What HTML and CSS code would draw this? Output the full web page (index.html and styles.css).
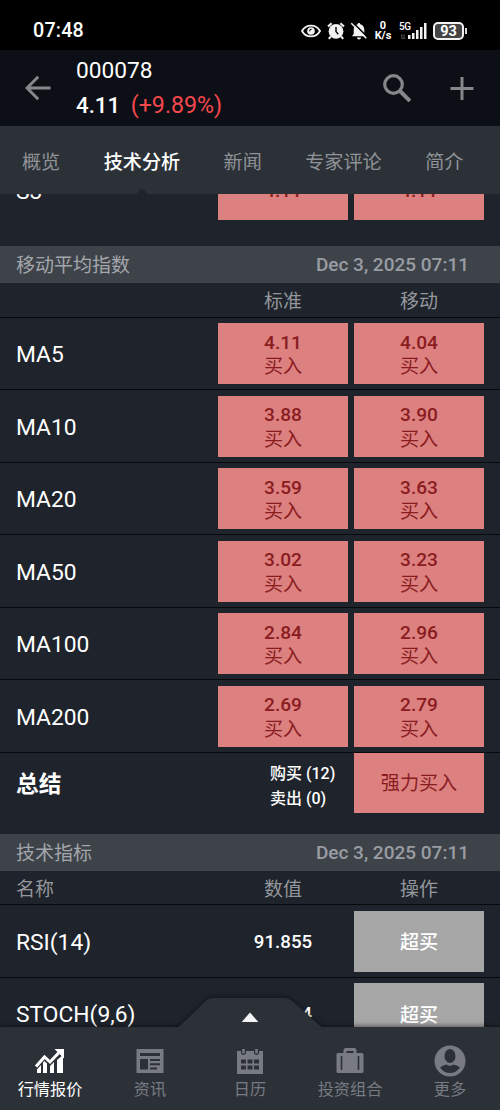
FILE: index.html
```html
<!DOCTYPE html>
<html lang="zh-CN">
<head>
  <meta charset="UTF-8">
  <meta name="viewport" content="width=device-width, initial-scale=1.0">
  <title>000078 技术分析</title>
  <link rel="stylesheet" href="styles.css">
</head>
<body>
  <div class="app">
    <div class="status-bar">
      <span class="time">07:48</span>
      <div class="status-icons">
        <svg class="eye" width="20" height="14" viewBox="0 0 20 14"><path d="M1 7C5-.2 15-.2 19 7 15 14.2 5 14.2 1 7z" fill="none" stroke="#f2f2f2" stroke-width="1.8"/><circle cx="10" cy="7" r="3.8" fill="#f2f2f2"/><path d="M8.7 7.2a1.8 1.8 0 0 1 2-2" fill="none" stroke="#000" stroke-width="1.1"/></svg>
        <svg class="alarm" width="18" height="18" viewBox="0 0 18 18"><circle cx="9" cy="9.3" r="7.4" fill="#f2f2f2"/><path d="M1 4.6L4.6 1.2M17 4.6l-3.6-3.4M3.8 14.5l-2 2.4M14.2 14.5l2 2.4" stroke="#f2f2f2" stroke-width="2"/><path d="M9 5v4.6l2.3 2.6" fill="none" stroke="#000" stroke-width="1.4"/></svg>
        <svg class="bell" width="18" height="18" viewBox="0 0 18 18"><path d="M9 1c.9 0 1.3.6 1.3 1.3C13 3 14.3 5 14.3 8v4l1.7 2.3H2L3.7 12V8C3.7 5 5 3 7.7 2.3 7.7 1.6 8.1 1 9 1zM7 15.4h4a2 2 0 0 1-4 0z" fill="#f2f2f2"/><path d="M2.6.2L17.6 15.2" stroke="#000" stroke-width="1.5"/><path d="M1.3 1.2L16.3 16.2" stroke="#f2f2f2" stroke-width="1.5"/></svg>
        <div class="speed"><span>0</span><span>K/s</span></div>
        <div class="signal">
          <span class="net">5G</span>
          <svg width="28" height="18" viewBox="0 0 28 18"><path d="M9 13h2.5v4H9zM13 11h2.5v6H13zM17 8h2.5v9H17zM21 5h2.5v12H21zM25 1h2.5v16H25z" fill="#f2f2f2"/><path d="M2 12.5h4v1H3v1h3V17H2v-1h3v-.5H2z" fill="#444"/></svg>
        </div>
        <div class="battery"><span class="level">93</span><span class="cap"></span></div>
      </div>
    </div>

    <header class="header">
      <svg class="back" width="26" height="26" viewBox="0 0 26 26"><path d="M25.5 13H2.5M13.2 1.8L2 13l11.2 11.2" fill="none" stroke="#85878b" stroke-width="3"/></svg>
      <div class="quote">
        <div class="symbol">000078</div>
        <div class="price">4.11 <span class="change">(+9.89%)</span></div>
      </div>
      <svg class="search" width="28" height="28" viewBox="0 0 28 28"><circle cx="10.5" cy="10.5" r="8.8" fill="none" stroke="#85878b" stroke-width="3.2"/><path d="M17 17l10 10" stroke="#85878b" stroke-width="4"/></svg>
      <svg class="add" width="24" height="24" viewBox="0 0 24 24"><path d="M.5 12.5h23M12 1v23" stroke="#85878b" stroke-width="3"/></svg>
    </header>

    <nav class="tabs">
      <a class="tab">概览</a>
      <a class="tab active">技术分析</a>
      <a class="tab">新闻</a>
      <a class="tab">专家评论</a>
      <a class="tab">简介</a>
    </nav>

    <main class="content">
      <div class="row row-cut">
        <span class="name">S3</span>
        <div class="cell buy">4.11</div>
        <div class="cell buy">4.11</div>
      </div>

      <section class="averages">
        <div class="section-title"><span>移动平均指数</span><span class="date">Dec 3, 2025 07:11</span></div>
        <div class="columns"><span></span><span>标准</span><span>移动</span></div>
        <div class="row">
          <span class="name">MA5</span>
          <div class="cell buy">4.11<br>买入</div>
          <div class="cell buy">4.04<br>买入</div>
        </div>
        <div class="row">
          <span class="name">MA10</span>
          <div class="cell buy">3.88<br>买入</div>
          <div class="cell buy">3.90<br>买入</div>
        </div>
        <div class="row">
          <span class="name">MA20</span>
          <div class="cell buy">3.59<br>买入</div>
          <div class="cell buy">3.63<br>买入</div>
        </div>
        <div class="row">
          <span class="name">MA50</span>
          <div class="cell buy">3.02<br>买入</div>
          <div class="cell buy">3.23<br>买入</div>
        </div>
        <div class="row">
          <span class="name">MA100</span>
          <div class="cell buy">2.84<br>买入</div>
          <div class="cell buy">2.96<br>买入</div>
        </div>
        <div class="row">
          <span class="name">MA200</span>
          <div class="cell buy">2.69<br>买入</div>
          <div class="cell buy">2.79<br>买入</div>
        </div>
        <div class="summary">
          <span class="summary-name">总结</span>
          <div class="counts">购买 (12)<br>卖出 (0)</div>
          <div class="cell buy">强力买入</div>
        </div>
      </section>

      <section class="indicators">
        <div class="section-title"><span>技术指标</span><span class="date">Dec 3, 2025 07:11</span></div>
        <div class="columns"><span class="left">名称</span><span>数值</span><span>操作</span></div>
        <div class="row">
          <span class="name">RSI(14)</span>
          <div class="value">91.855</div>
          <div class="cell over">超买</div>
        </div>
        <div class="row">
          <span class="name">STOCH(9,6)</span>
          <div class="value">98.334</div>
          <div class="cell over">超买</div>
        </div>
      </section>
    </main>

    <footer class="bottom-nav">
      <svg class="drawer" width="150" height="34" viewBox="0 0 150 34"><path d="M2 34L7 30 30 7.5Q34 4 39 4H109Q114 4 118 7.5L143 30 148 34z" fill="#2c3138"/><path d="M75 18.5l8.3 9.5H66.7z" fill="#f4f4f6"/></svg>
      <a class="nav-item active">
        <svg width="32" height="32" viewBox="0 0 32 32"><path d="M2 21.5L10.5 12l5.5 5L26 6.5" fill="none" stroke="#fff" stroke-width="3"/><path d="M20.5 4H30v9.5z" fill="#fff"/><path d="M3 28v-3.5L7 20v8zM9 28V17.5l1.5-1.5L13 18.5V28zM16 28v-7l4-4v11zM23 28V15l6-5v18z" fill="#fff"/></svg>
        <span>行情报价</span>
      </a>
      <a class="nav-item">
        <svg width="32" height="32" viewBox="0 0 32 32"><path fill-rule="evenodd" d="M3 4h26q.5 0 .5.5v23q0 .5-.5.5H3q-.5 0-.5-.5v-23Q2.5 4 3 4zM6 8v3h20V8zM6 14v10.5h8V14zM16 14v2h10v-2zM16 18.3v2h10v-2zM16 22.5v2h7v-2z" fill="#787b83"/></svg>
        <span>资讯</span>
      </a>
      <a class="nav-item">
        <svg width="32" height="32" viewBox="0 0 32 32"><path fill-rule="evenodd" d="M3 6h4v2.5q2.5 3 5 0V6h8v2.5q2.5 3 5 0V6h4v23H3zM7 14.5v4h5v-4zM13.5 14.5v4h5v-4zM20 14.5v4h5v-4zM7 20.5v4h5v-4zM13.5 20.5v4h5v-4zM20 20.5v4h5v-4z" fill="#787b83"/><path d="M9.5 4v4.5M22.5 4v4.5" stroke="#787b83" stroke-width="2.5"/></svg>
        <span>日历</span>
      </a>
      <a class="nav-item">
        <svg width="32" height="32" viewBox="0 0 32 32"><path d="M11 8.5V5.500q0-1 1-1h8q1 0 1 1v3" fill="none" stroke="#787b83" stroke-width="3"/><rect x="2.5" y="8" width="27" height="20" rx="1.5" fill="#787b83"/><path d="M7.5 11v14M24.5 11v14" stroke="#2c3138" stroke-width="1.6"/></svg>
        <span>投资组合</span>
      </a>
      <a class="nav-item">
        <svg width="34" height="34" viewBox="0 0 32 32"><circle cx="16" cy="16" r="15.5" fill="#787b83"/><ellipse cx="16" cy="11" rx="5.5" ry="7" fill="#2c3138"/><path d="M6 22.5q3-2.5 6.5-3 3.5 2.5 7 0 3.500.5 6.500 3Q22 28 16 28T6 22.5z" fill="#2c3138"/></svg>
        <span>更多</span>
      </a>
    </footer>
  </div>
</body>
</html>
```
FILE: styles.css
```css
body {
  font-family: Roboto, "Noto Sans CJK SC", sans-serif;
  margin: 0;
  background-color: #1f242c;
  color: #fff;
}

svg {
  display: block;
  flex-shrink: 0;
}

.app {
  display: flex;
  flex-direction: column;
  height: 1110px;
  overflow: hidden;
}

/* Status bar */
.status-bar {
  display: flex;
  align-items: center;
  justify-content: space-between;
  box-sizing: border-box;
  height: 50px;
  padding: 11px 33px 0 33px;
  background: #000;
  flex-shrink: 0;
}

.time {
  font-size: 19.7px;
  font-weight: 500;
  letter-spacing: 0.2px;
}

.status-icons {
  display: flex;
  align-items: center;
}

.eye {
  margin-right: 6px;
}

.alarm {
  margin-right: 5px;
}

.bell {
  margin-right: 6px;
}

.speed {
  display: flex;
  flex-direction: column;
  align-items: center;
  width: 18px;
  margin-right: 7px;
  font-size: 11px;
  font-weight: 700;
  line-height: 10px;
}

.signal {
  position: relative;
  margin-right: 6px;
}

.net {
  position: absolute;
  left: 0;
  top: 0;
  font-size: 10px;
  font-weight: 500;
  line-height: 10px;
  letter-spacing: -0.5px;
}

.battery {
  display: flex;
  align-items: center;
  gap: 1px;
}

.level {
  box-sizing: border-box;
  width: 31px;
  height: 18px;
  border: 2px solid #f2f2f2;
  border-radius: 5px;
  background: #444;
  font-size: 14.5px;
  font-weight: 700;
  line-height: 15px;
  text-align: center;
}

.cap {
  width: 2px;
  height: 6px;
  background: #d8d8d8;
}

/* Header */
.header {
  display: flex;
  align-items: center;
  box-sizing: border-box;
  height: 76px;
  padding: 0 26px 0 25px;
  background: #0c0f15;
  flex-shrink: 0;
}

.quote {
  flex: 1;
  margin-left: 25px;
}

.symbol {
  font-size: 22.7px;
  line-height: 34px;
}

.price {
  font-size: 22.3px;
  font-weight: 500;
  line-height: 34px;
  white-space: pre;
}

.change {
  margin-left: 5px;
  font-size: 23.2px;
  font-weight: 400;
  color: #f5484d;
}

.search {
  margin-right: 39px;
}

/* Tabs */
.tabs {
  display: flex;
  gap: 43.5px;
  box-sizing: border-box;
  height: 68px;
  padding-left: 22px;
  background: #2c3138;
  font-size: 19.1px;
  line-height: 73px;
  color: #8f9296;
  white-space: nowrap;
  flex-shrink: 0;
}

.tab {
  position: relative;
}

.tab.active {
  color: #fff;
  font-weight: 500;
}

.tab.active::after {
  content: "";
  position: absolute;
  left: 50%;
  bottom: 0;
  margin-left: -6px;
  border: 6px solid transparent;
  border-top: 0;
  border-bottom-color: #1f242c;
}

/* Tables */
.content {
  flex: 1;
  min-height: 0;
  overflow: hidden;
}

.row,
.summary {
  display: grid;
  grid-template-columns: 196px 130px 130px;
  column-gap: 6px;
  align-items: center;
  box-sizing: border-box;
  padding-left: 16px;
}

.row {
  height: 72.5px;
  border-top: 1px solid #07090c;
}

.row-cut {
  height: 61px;
  margin: -35px 0 26px;
  border-top: 0;
}

.name {
  padding-top: 2px;
  font-size: 22.8px;
}

.row-cut .name {
  padding-top: 3px;
}

.cell {
  display: flex;
  flex-direction: column;
  justify-content: center;
  height: 61px;
  font-size: 19.1px;
  line-height: 24.5px;
  text-align: center;
}

.row .cell {
  display: block;
  box-sizing: border-box;
  padding-top: 7.5px;
}

.row .buy::first-line {
  font-weight: 500;
}

.row-cut .cell {
  padding-top: 19.5px;
}

.row .over {
  padding-top: 20.5px;
  font-weight: 500;
}

.buy {
  background: #dc8080;
  color: #8a1c20;
}

.over {
  background: #a6a6a6;
  color: #fff;
}

.value {
  padding-top: 1px;
  font-size: 18.7px;
  font-weight: 500;
  text-align: center;
}

.section-title {
  display: flex;
  justify-content: space-between;
  box-sizing: border-box;
  height: 37px;
  padding: 0 31px 0 16px;
  background: #3e434a;
  color: #a3a6aa;
  font-size: 19px;
  line-height: 39px;
}

.date {
  font-size: 19px;
  font-weight: 500;
  line-height: 38px;
  color: #999da3;
}

.columns {
  display: grid;
  grid-template-columns: 196px 130px 130px;
  column-gap: 6px;
  height: 34px;
  padding-left: 16px;
  color: #94979b;
  font-size: 19px;
  line-height: 37px;
  text-align: center;
}

.averages .columns {
  height: 33.9px;
}

.indicators .columns {
  height: 33.4px;
}

.left {
  text-align: left;
}

.summary {
  height: 82px;
  padding-bottom: 21px;
  border-top: 1px solid #07090c;
}

.summary .cell {
  box-sizing: border-box;
  height: 60px;
  padding-top: 3px;
}

.summary-name {
  font-size: 22.7px;
  font-weight: 700;
}

.counts {
  padding-left: 52px;
  font-size: 16px;
  font-weight: 500;
  line-height: 25px;
  margin-top: 6px;
  white-space: nowrap;
}

/* Bottom navigation */
.bottom-nav {
  position: relative;
  display: grid;
  grid-template-columns: repeat(5, 1fr);
  box-sizing: border-box;
  height: 83px;
  padding-top: 18px;
  background: #2c3138;
  box-shadow: 0 -1px 5px rgba(0, 0, 0, 0.5);
  flex-shrink: 0;
}

.drawer {
  position: absolute;
  left: 175px;
  top: -33px;
  filter: drop-shadow(0 -2px 2px rgba(0, 0, 0, 0.35));
}

.nav-item {
  display: flex;
  flex-direction: column;
  align-items: center;
  color: #787b83;
  font-size: 16.2px;
  line-height: 26px;
}

.nav-item svg {
  height: 32px;
}

.nav-item.active {
  color: #fff;
}
```
